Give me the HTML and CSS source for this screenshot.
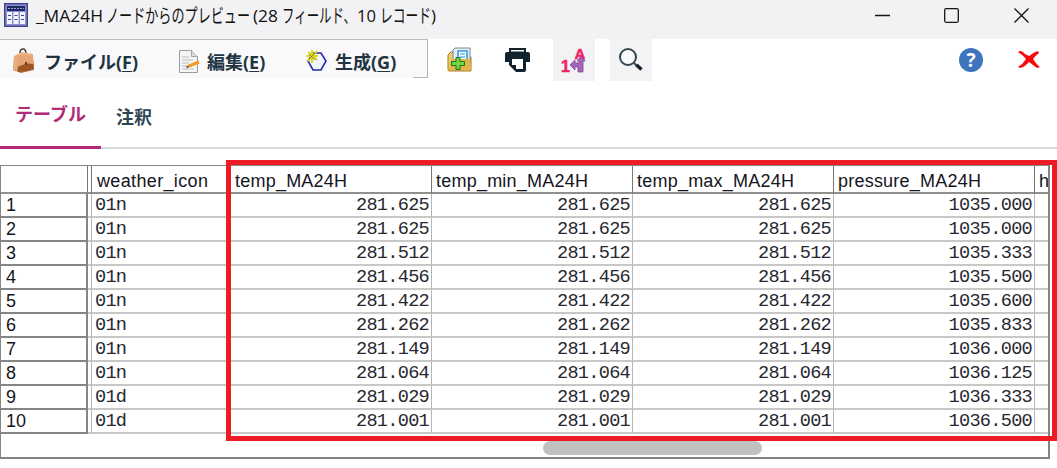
FILE: index.html
```html
<!DOCTYPE html>
<html lang="ja">
<head>
<meta charset="utf-8">
<title>_MA24H ノードからのプレビュー</title>
<link rel="stylesheet" href="styles.css">
</head>
<body>
<header class="titlebar">
  <svg class="app-icon" width="24" height="24" viewBox="0 0 24 24"><rect x=".7" y=".7" width="22.6" height="22.6" fill="#8d8fce" stroke="#3c438f" stroke-width="1.4"/><path fill="#1d2964" d="M3 3h18v5H3z"/><path stroke="#9aa4d8" stroke-dasharray="2 1" d="M4 5.5h16"/><path fill="#f4f6ff" d="M3 9h5v12H3zM9.5 9h5v12h-5zM16 9h5v12h-5z"/><path stroke="#39468f" stroke-width="1.2" d="M4 12.5h3M4 16.5h3M10.5 12.5h3M10.5 16.5h3M17 12.5h3M17 16.5h3"/></svg>
  <svg class="title-text" width="410" height="38" viewBox="0 0 410 38">
    <text x="1" y="22" textLength="67" lengthAdjust="spacingAndGlyphs">_MA24H</text>
    <text class="kana" x="71" y="22.500" textLength="144" lengthAdjust="spacingAndGlyphs">ノードからのプレビュー</text>
    <text x="218" y="22" textLength="25" lengthAdjust="spacingAndGlyphs">(28</text>
    <text class="kana" x="247" y="22.500" textLength="74" lengthAdjust="spacingAndGlyphs">フィールド、</text>
    <text x="322" y="22" textLength="19" lengthAdjust="spacingAndGlyphs">10</text>
    <text class="kana" x="345" y="22.500" textLength="51" lengthAdjust="spacingAndGlyphs">レコード</text>
    <text x="396" y="22" textLength="5" lengthAdjust="spacingAndGlyphs">)</text>
  </svg>
  <svg class="window-controls" width="160" height="38" viewBox="0 0 160 38"><path d="M0 15.5h15M139.5 8.5l14 14M153.5 8.5l-14 14"/><rect x="69.700" y="8.700" width="13.600" height="13.600" rx="1.5"/></svg>
</header>

<section class="toolbar">
  <nav class="menu">
    <div class="menu-item file">
      <svg width="24" height="26" viewBox="0 0 24 26"><defs><linearGradient id="bag" x2="0" y2="1"><stop stop-color="#f2b887"/><stop offset="1" stop-color="#c0703a"/></linearGradient></defs><path d="M8 5q0-4 3-4t3 5" fill="none" stroke="#4d4039" stroke-width="1.5"/><path d="M2 8l8-4 11 2 1 16-13 3-8-3z" fill="url(#bag)"/><path d="M2 8l4 2-1 13-4-2z" fill="#e2b187"/><path d="M6 13q7-3 15-1l1 9q-8 3-16 3z" fill="#9d5527"/><path d="M6 11q8-3 15-1v6q-7-2-15 3z" fill="#e6a673"/><path d="M14 14v3" stroke="#6f3b1e" stroke-width="2"/></svg>
      <span>ファイル(<u>F</u>)</span>
    </div>
    <div class="menu-item edit">
      <svg width="22" height="25" viewBox="0 0 22 25"><path d="M1.500 1.500h12l6 6v16h-18z" fill="#f3f4f4" stroke="#9a9d9e"/><path d="M13.500 1.500v6h6" fill="#ddd" stroke="#a2a4a5"/><path d="M4 8h7M4 11h11M4 14h7M4 17h5M4 20h12" stroke="#bdbfc0"/><path d="M11 17l10-4" stroke="#f49a21" stroke-width="3.200"/><path d="M8.500 18.500l2.500-1.500" stroke="#805122" stroke-width="2"/></svg>
      <span>編集(<u>E</u>)</span>
    </div>
    <div class="menu-item generate">
      <svg width="22" height="22" viewBox="0 0 22 22"><path d="M7 3h8l5 8-5 9H7l-5-9z" fill="#edf5ff" stroke="#2829a6" stroke-width="1.6"/><path d="M.5 6h11.500M6 0v13M2 2l9 8M11 1l-9 10" stroke="#ddd51c" stroke-width="2"/><path d="M3 4l6 6M9 3L3 9" stroke="#746f20" stroke-width=".7"/></svg>
      <span>生成(<u>G</u>)</span>
    </div>
    <span class="menu-corner"></span>
  </nav>
  <div class="tools">
    <div class="tool">
      <svg width="26" height="26" viewBox="0 0 26 26"><path d="M1 8l3-3h4v5h16v14H2q-1 0-1-2z" fill="#f2cf66" stroke="#a97924"/><path d="M8 1h15v15H6V3z" fill="#e5edf1" stroke="#788793"/><path d="M11 4h9v10h-9z" fill="#fff" stroke="#329be3" stroke-width="1.6"/><path d="M13 7h5M13 10h5" stroke="#62b8ed" stroke-width="1.5"/><path d="M4 12h19l1 11H2z" fill="#e2b544"/><path d="M9 10.500h4v4h4.500v4H13v4H9v-4H4.500v-4H9z" fill="#72d443" stroke="#167923"/></svg>
    </div>
    <div class="tool">
      <svg width="25" height="26" viewBox="0 0 25 26"><path fill="#10232e" d="M4 1h17v4h2q2 0 2 2v8h-4v8q0 2-2 2h-8l-7-7v-3H0V7q0-2 2-2h2z"/><path d="M6 3h13v1.500H6zM7 12h11v10h-7v-4H7z" fill="#fff"/></svg>
    </div>
    <div class="tool shaded">
      <svg width="42" height="42" viewBox="0 0 42 42"><path d="M28 17l4 5h-2v11h-5v-5h-3v3l-5-5 5-5v3h4v-2h-2z" fill="#a466b7" stroke="#7e4597" stroke-width=".8"/><text x="21.500" y="19.500" class="label-letter">A</text><text x="8" y="33" class="label-digit">1</text></svg>
    </div>
    <div class="tool shaded">
      <svg width="26" height="26" viewBox="0 0 26 26"><circle cx="10" cy="10" r="8" fill="#f9fbfc" stroke="#354650" stroke-width="2"/><path d="M16 16l3 3" stroke="#354650" stroke-width="2"/><path d="M18.500 18l5 4.500" stroke="#13242d" stroke-width="3.600"/></svg>
    </div>
  </div>
  <div class="actions">
    <svg width="26" height="26" viewBox="0 0 26 26"><circle cx="13" cy="13" r="12" fill="#3d74bd"/><text x="13" y="19.500" class="question">?</text></svg>
    <svg width="24" height="22" viewBox="0 0 24 22"><path d="M1 3q3-3 7 2l4 2q5-4 9-5l1 2q-4 3-6 6 3 5 7 8l-3 1q-4-3-8-6-4 5-9 6l-2-1q5-3 8-8-3-4-8-7z" fill="#f50b0b"/></svg>
  </div>
</section>

<nav class="tabs"><div class="tab active">テーブル</div><div class="tab">注釈</div></nav>

<main class="grid-panel">
  <table class="grid">
    <colgroup><col class="c-index"><col class="c-gap"><col class="c-icon"><col class="c-value"><col class="c-value"><col class="c-value"><col class="c-value"><col class="c-rest"></colgroup>
    <thead><tr><th></th><th></th><th class="wide">weather_icon</th><th>temp_MA24H</th><th>temp_min_MA24H</th><th>temp_max_MA24H</th><th>pressure_MA24H</th><th>h</th></tr></thead>
    <tbody>
      <tr><td class="index">1</td><td></td><td class="code">01n</td><td>281.625</td><td>281.625</td><td>281.625</td><td>1035.000</td><td></td></tr>
      <tr><td class="index">2</td><td></td><td class="code">01n</td><td>281.625</td><td>281.625</td><td>281.625</td><td>1035.000</td><td></td></tr>
      <tr><td class="index">3</td><td></td><td class="code">01n</td><td>281.512</td><td>281.512</td><td>281.512</td><td>1035.333</td><td></td></tr>
      <tr><td class="index">4</td><td></td><td class="code">01n</td><td>281.456</td><td>281.456</td><td>281.456</td><td>1035.500</td><td></td></tr>
      <tr><td class="index">5</td><td></td><td class="code">01n</td><td>281.422</td><td>281.422</td><td>281.422</td><td>1035.600</td><td></td></tr>
      <tr><td class="index">6</td><td></td><td class="code">01n</td><td>281.262</td><td>281.262</td><td>281.262</td><td>1035.833</td><td></td></tr>
      <tr><td class="index">7</td><td></td><td class="code">01n</td><td>281.149</td><td>281.149</td><td>281.149</td><td>1036.000</td><td></td></tr>
      <tr><td class="index">8</td><td></td><td class="code">01n</td><td>281.064</td><td>281.064</td><td>281.064</td><td>1036.125</td><td></td></tr>
      <tr><td class="index">9</td><td></td><td class="code">01d</td><td>281.029</td><td>281.029</td><td>281.029</td><td>1036.333</td><td></td></tr>
      <tr><td class="index">10</td><td></td><td class="code">01d</td><td>281.001</td><td>281.001</td><td>281.001</td><td>1036.500</td><td></td></tr>
    </tbody>
  </table>
  <div class="scroll-track"><div class="scroll-thumb"></div></div>
</main>
<div class="highlight"></div>
</body>
</html>
```
FILE: styles.css
```css
* { box-sizing: border-box; }
body { margin: 0; width: 1057px; height: 468px; overflow: hidden; position: relative; background: #fff; color: #15151d; font-family: "Liberation Sans", "Noto Sans CJK JP", sans-serif; }
svg { display: block; flex: none; }
.titlebar { height: 39px; display: flex; align-items: flex-start; background: #f2f2f5; }
.app-icon { margin: 3px 0 0 4px; }
.title-text { margin-left: 7px; fill: #111; font: 17px "Open Sans", "Noto Sans CJK JP", sans-serif; }
.kana { font: 19px "Noto Sans CJK JP", sans-serif; }
.window-controls { margin-left: 430px; fill: none; stroke: #151515; stroke-width: 1.3; }
.toolbar { height: 43px; display: flex; align-items: flex-start; }
.menu { width: 428px; height: 39px; display: flex; padding-left: 12px; background: #f9f9fc; border-top: 1px solid #bbb; border-right: 1px solid #b5b5b5; }
.menu-item { display: flex; align-items: center; height: 42px; white-space: nowrap; font: bold 18px "Open Sans", "Noto Sans CJK JP", sans-serif; color: #20333f; }
.menu-item u { text-decoration-thickness: 1px; text-underline-offset: 2px; }
.file { width: 166px; gap: 8px; }
.edit { width: 128px; gap: 7px; }
.generate { gap: 7px; }
.menu-corner { width: 14px; margin-left: auto; border-bottom: 1px solid #b5b5b5; }
.tools { display: flex; margin-left: 11px; gap: 15px; }
.tool { width: 42px; height: 42px; display: flex; align-items: center; justify-content: center; }
.shaded { background: #f3f3f6; }
.label-letter { font: bold 15px "Liberation Sans", sans-serif; fill: #ec2365; stroke: #ec2365; stroke-width: .5; }
.label-digit { font: bold 16px "Liberation Sans", sans-serif; fill: #ec2365; stroke: #ec2365; stroke-width: .5; }
.actions { display: flex; align-items: center; gap: 33px; margin: 8px 0 0 306px; }
.question { font: bold 19px "Noto Sans", sans-serif; fill: #fff; text-anchor: middle; }
.tabs { height: 67px; display: flex; border-bottom: 2px solid #d9d9d9; font: bold 18px "Noto Sans CJK JP", sans-serif; color: #304652; }
.tab { height: 66px; padding: 21px 0 0 15px; }
.active { width: 101px; height: 67px; padding-top: 18px; color: #b12c76; border-bottom: 3px solid #b12c76; }
.grid-panel { width: 1050px; height: 294px; margin-top: 16px; border: 1px solid #858585; border-right-width: 2px; border-bottom-width: 2px; overflow: hidden; }
.grid { width: 1048px; table-layout: fixed; border-collapse: separate; border-spacing: 0; }
.c-index { width: 87px; }
.c-gap { width: 4px; }
.c-icon { width: 139px; }
.c-value { width: 201px; }
.c-rest { width: 14px; }
th { height: 28px; padding: 4px 0 0 4px; border-right: 1px solid #777; border-bottom: 2px solid #909090; font-size: 18px; line-height: 22px; font-weight: normal; text-align: left; letter-spacing: .22px; overflow: hidden; white-space: nowrap; }
.wide { padding-left: 5px; letter-spacing: .35px; }
td { height: 24px; padding: 1px 2px 0 0; border-right: 1px solid #b5b5b5; border-bottom: 2px solid #c8c8c8; text-align: right; color: #282830; font: 18.6px/21px "Liberation Mono", monospace; letter-spacing: -.73px; white-space: nowrap; }
th:nth-child(2), td:nth-child(2) { padding: 0; border-right-width: 1px; }
th:last-child, td:last-child { border-right: 0; }
.code { text-align: left; padding-left: 3px; }
.index { padding: 0 0 0 5px; border-right: 2px solid #858585; border-bottom: 2px solid #858585; text-align: left; color: #15151d; font: 18px/22px "Liberation Sans", sans-serif; letter-spacing: 0; }
.scroll-track { height: 24px; padding: 7px 0 0 542px; }
.scroll-thumb { width: 219px; height: 14px; border-radius: 7px; background: #c1c1c1; }
.highlight { position: absolute; left: 226px; top: 160px; width: 831px; height: 281px; border: 5px solid #ed1c24; }
```
